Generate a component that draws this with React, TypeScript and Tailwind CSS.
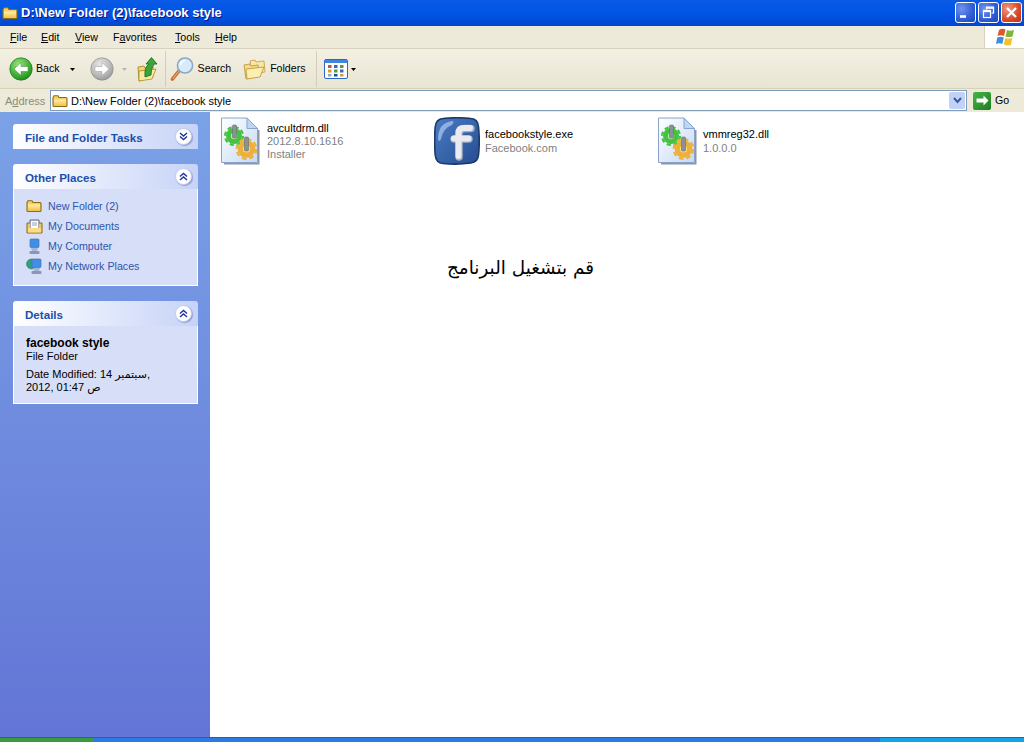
import React from "react";

const Folder = ({ s = 16 }: { s?: number }) => (
  <svg width={s} height={s} viewBox="0 0 16 16">
    <defs>
      <linearGradient id="fo" x1="0" y1="0" x2="0" y2="1">
        <stop offset="0" stopColor="#fff0a8" />
        <stop offset="1" stopColor="#f0c14a" />
      </linearGradient>
    </defs>
    <path d="M1 4.5 L2 2.8 H6 L7 4.5 H14 Q15 4.5 15 5.5 V12.5 Q15 13.5 14 13.5 H2 Q1 13.5 1 12.5 Z" fill="#f5cf62" stroke="#8f6a14" strokeWidth="1.1" />
    <path d="M2 6.5 H14 V12.8 H2 Z" fill="url(#fo)" />
  </svg>
);

const OpenFolders = () => (
  <svg width="24" height="24" viewBox="0 0 24 24">
    <path d="M7 4 L12 3 L13 5 L21 4 L22 15 L9 17 Z" fill="#f8e7a6" stroke="#c9a44c" strokeWidth="0.9" />
    <path d="M1 8 L7 7 L8 9 L15 8 L16 19 L3 22 Z" fill="#f6dc8a" stroke="#c09a3e" strokeWidth="0.9" />
    <path d="M3 12 L21 10 L17 20 L4 22 Z" fill="#fcedb0" stroke="#c09a3e" strokeWidth="0.9" />
  </svg>
);

const Up = () => (
  <svg width="22" height="26" viewBox="0 0 22 26">
    <path d="M2 11 L8 10 L9 12 L17 11 L17 21 L3 25 Z" fill="#f3d26f" stroke="#a98a2c" strokeWidth="0.9" />
    <path d="M3 15 L20 13 L16 23 L3 25 Z" fill="#fbe9a2" stroke="#a98a2c" strokeWidth="0.8" />
    <path d="M9 21 Q8 11 13 8 L10 8 L15.5 1.5 L21 8 L18 8 Q15 12 15 19 Z" fill="#3aa53a" stroke="#186b18" strokeWidth="0.8" />
  </svg>
);

const Search = () => (
  <svg width="26" height="26" viewBox="0 0 26 26">
    <path d="M8.5 15.5 L2.5 23" stroke="#c06f35" strokeWidth="3.6" strokeLinecap="round" />
    <path d="M8.5 15.5 L3 22.5" stroke="#eeaa76" strokeWidth="1.2" strokeLinecap="round" />
    <circle cx="15" cy="9.5" r="7.6" fill="#d7ecfb" stroke="#8aa8c4" strokeWidth="1.5" />
    <path d="M10.5 9 A5 5 0 0 1 15 4.8" stroke="#fff" strokeWidth="1.6" fill="none" />
  </svg>
);

const Views = () => (
  <svg width="24" height="20" viewBox="0 0 24 20">
    <rect x="0.5" y="0.5" width="23" height="19" rx="1.5" fill="#fff" stroke="#2c66c9" />
    <rect x="1" y="1" width="22" height="3" fill="#3f86e0" />
    <g>
      <rect x="4" y="6" width="3.5" height="3" fill="#c2543f" /><rect x="10" y="6" width="3.5" height="3" fill="#3a69b5" /><rect x="16" y="6" width="3.5" height="3" fill="#5b9a3c" />
      <rect x="4" y="10.5" width="3.5" height="3" fill="#c9a043" /><rect x="10" y="10.5" width="3.5" height="3" fill="#5b9a3c" /><rect x="16" y="10.5" width="3.5" height="3" fill="#3a69b5" />
      <rect x="4" y="15" width="3.5" height="2.5" fill="#a3a3c0" /><rect x="10" y="15" width="3.5" height="2.5" fill="#1f4f9c" /><rect x="16" y="15" width="3.5" height="2.5" fill="#c9a043" />
    </g>
  </svg>
);

const Nav = ({ dir, on }: { dir: "l" | "r"; on: boolean }) => (
  <svg width="24" height="24" viewBox="0 0 24 24">
    <defs>
      <radialGradient id={"nv" + dir} cx="0.4" cy="0.3" r="0.8">
        <stop offset="0" stopColor={on ? "#9fe27c" : "#e6e6e6"} />
        <stop offset="0.6" stopColor={on ? "#3fb034" : "#b9b9b9"} />
        <stop offset="1" stopColor={on ? "#1b7d1e" : "#8e8e8e"} />
      </radialGradient>
    </defs>
    <circle cx="12" cy="12" r="11.2" fill={"url(#nv" + dir + ")"} stroke={on ? "#1d7a22" : "#8f8f8f"} strokeWidth="0.7" />
    <path d={dir === "l" ? "M5 12 L12 5.5 V9.5 H19 V14.5 H12 V18.5 Z" : "M19 12 L12 5.5 V9.5 H5 V14.5 H12 V18.5 Z"} fill="#fff" stroke={on ? "#2c8a2c" : "#9a9a9a"} strokeWidth="0.5" />
  </svg>
);

const Chev = ({ up }: { up: boolean }) => (
  <span className="flex h-[17px] w-[17px] items-center justify-center rounded-full border border-[#c3cdea] bg-white shadow-[1px_1px_1px_#8d9dd6]">
    <svg width="9" height="9" viewBox="0 0 9 9" fill="none" stroke="#20329a" strokeWidth="1.4">
      {up ? <path d="M1 4.5 L4.5 1.5 L8 4.5 M1 8 L4.5 5 L8 8" /> : <path d="M1 1 L4.5 4 L8 1 M1 4.5 L4.5 7.5 L8 4.5" />}
    </svg>
  </span>
);

const Dll = ({ id }: { id: string }) => (
  <svg width="40" height="48" viewBox="0 0 40 48">
    <defs>
      <linearGradient id={id} x1="0" y1="0" x2="1" y2="1">
        <stop offset="0" stopColor="#ffffff" />
        <stop offset="1" stopColor="#c4d9f5" />
      </linearGradient>
    </defs>
    <path d="M4 47.5 H39.5 V13 H38 V46 H4 Z" fill="#8c96a6" />
    <path d="M1.5 1 H27 L37.5 11.5 V45.5 H1.5 Z" fill={`url(#${id})`} stroke="#8aa3cc" />
    <path d="M27 1 V11.5 H37.5 Z" fill="#bcd6f5" stroke="#8aa3cc" />
    <circle cx="14" cy="19" r="8" fill="#45c240" />
    <circle cx="14" cy="19" r="9" fill="none" stroke="#45c240" strokeWidth="2.2" strokeDasharray="4.2 2.9" />
    <circle cx="14" cy="19" r="3.2" fill="#b7eaa0" />
    <rect x="12.5" y="8" width="4" height="13" rx="1" fill="#8a9295" stroke="#5f6568" strokeWidth="0.5" />
    <circle cx="26.5" cy="32" r="8.8" fill="#eeb03c" />
    <circle cx="26.5" cy="32" r="9.8" fill="none" stroke="#eeb03c" strokeWidth="2.2" strokeDasharray="4.6 3.1" />
    <circle cx="26.5" cy="32" r="3.6" fill="#f9dd84" />
    <rect x="24.5" y="20" width="4" height="14" rx="1" fill="#8a9295" stroke="#5f6568" strokeWidth="0.5" />
  </svg>
);

const Fb = () => (
  <svg width="46" height="48" viewBox="0 0 46 48">
    <defs>
      <linearGradient id="fb" x1="0" y1="0" x2="1" y2="1">
        <stop offset="0" stopColor="#4a7cc4" />
        <stop offset="1" stopColor="#264d90" />
      </linearGradient>
    </defs>
    <path d="M9 1.5 Q23 0 37 1.5 Q44 2 44.5 10 Q46 24 44.5 38 Q44 45 37 46 Q23 48 9 46.5 Q2 46 1.2 38 Q0 24 1.2 10 Q2 2 9 1.5 Z" fill="url(#fb)" stroke="#1c3869" strokeWidth="1.6" />
    <path d="M4 22 Q4 6 18 4 Q21 4 18 8 Q9 11 7 22 Q5 26 4 22 Z" fill="#a8c6ee" opacity="0.75" />
    <path d="M25 40 V17 Q25 11.5 31 11.5 H37 M20 22 H35" fill="none" stroke="#9fb0c8" strokeWidth="7.5" strokeLinecap="round" />
    <path d="M24.5 39 V16 Q24.5 11 30 11 H36 M20 21.5 H34.5" fill="none" stroke="#e9ebee" strokeWidth="6" strokeLinecap="round" />
  </svg>
);

const Tile = ({ w, icon, gap, lh, lines }: { w: string; icon: React.ReactNode; gap: string; lh: string; lines: string[] }) => (
  <div className={`flex items-center ${w} ${gap}`}>
    <div className="flex shrink-0">{icon}</div>
    <div className="flex flex-col">
      {lines.map((l, i) => (
        <span key={l} className={`${lh} whitespace-nowrap ${i === 0 ? "text-black" : "text-[#7f7f7f]"}`}>{l}</span>
      ))}
    </div>
  </div>
);

const Panel = ({ title, up, children }: { title: string; up: boolean; children?: React.ReactNode }) => (
  <div className="w-[185px]">
    <div className="flex h-[25px] items-center justify-between rounded-t-[3px] bg-gradient-to-r from-white to-[#c6d3f7] pl-3 pr-[6px]">
      <span className="pt-[2px] text-[11.6px] font-bold text-[#1c4fab]">{title}</span>
      <Chev up={up} />
    </div>
    {children && <div className="border border-t-0 border-white bg-[#d6dff7] px-3">{children}</div>}
  </div>
);

const Place = ({ icon, label }: { icon: React.ReactNode; label: string }) => (
  <div className="flex h-[20px] items-center gap-[5px] text-[10.7px] text-[#2f55ad]">
    <span className="flex w-[18px] justify-center">{icon}</span>
    <span>{label}</span>
  </div>
);

const Monitor = ({ globe }: { globe?: boolean }) => (
  <svg width="17" height="17" viewBox="0 0 17 17">
    {globe && <circle cx="5.5" cy="6" r="5" fill="#2f9f7c" stroke="#1c6e68" strokeWidth="0.5" />}
    <rect x={globe ? 6 : 4} y="1" width="9" height="8.5" rx="1" fill="#3f8fe6" stroke="#5a6fa0" strokeWidth="0.7" />
    <path d={globe ? "M7 10 H14 L13 13 H8 Z" : "M5 10 H12 L11 13 H6 Z"} fill="#a5b4d6" />
    <rect x={globe ? 5.5 : 3.5} y="13" width="10" height="3" rx="1" fill="#8a97bc" />
  </svg>
);

const Docs = () => (
  <svg width="17" height="17" viewBox="0 0 17 17">
    <path d="M1 5 H4 V2 H13 V5 H16 V15 H1 Z" fill="#eec765" stroke="#8f6a14" strokeWidth="1" />
    <rect x="4.5" y="2.5" width="8" height="8" fill="#fff" stroke="#6f86b6" strokeWidth="0.6" />
    <path d="M6 5 H11 M6 7 H11" stroke="#6f86b6" strokeWidth="0.8" />
    <rect x="2" y="10" width="13" height="4.5" fill="#f8dc89" />
  </svg>
);

const Flag = () => (
  <svg width="20" height="20" viewBox="0 0 20 20">
    <path d="M3 3 Q6 1 9.5 2.5 L8 9 Q5 7.5 1.5 9 Z" fill="#e0562c" />
    <path d="M11 3 Q14 4.5 18 3 L16.5 9.5 Q13 10.5 9.5 9.5 Z" fill="#7fb53a" />
    <path d="M1.2 10.5 Q5 9 7.8 10.5 L6.3 17 Q3 15.5 0 17 Z" fill="#3f8fdc" />
    <path d="M9.2 11 Q13 12 16.3 11 L15 18 Q11 19 7.8 17.5 Z" fill="#f2c230" />
  </svg>
);

const WinBtn = ({ kind }: { kind: "min" | "max" | "close" }) => (
  <div className={`flex h-[21px] w-[21px] items-center justify-center rounded-[3px] border border-white ${kind === "close" ? "bg-[radial-gradient(circle_at_30%_30%,#ec9a80,#d9482a_60%,#b53414)]" : "bg-[radial-gradient(circle_at_30%_30%,#6f95ee,#2f5bd6_60%,#2146b8)]"}`}>
    <svg width="15" height="15" viewBox="0 0 15 15" fill="none" stroke="#fff">
      {kind === "min" && <path d="M2 11.5 H8" strokeWidth="2.6" />}
      {kind === "max" && (<g strokeWidth="1.2"><path d="M5.5 4.5 V2 H12.5 V8 H10.5" /><path d="M5.5 3 H12.5" strokeWidth="1.6" /><rect x="2.5" y="5.5" width="7" height="7" /><path d="M2.5 6.3 H9.5" strokeWidth="1.6" /></g>)}
      {kind === "close" && <path d="M3 3 L12 12 M12 3 L3 12" strokeWidth="2.3" />}
    </svg>
  </div>
);

const Tri = ({ c = "#000" }: { c?: string }) => (
  <svg width="5" height="3" viewBox="0 0 5 3"><path d="M0 0 H5 L2.5 3 Z" fill={c} /></svg>
);

export default function App() {
  return (
    <div className="flex h-[742px] w-[1024px] flex-col overflow-hidden bg-white font-['Liberation_Sans','DejaVu_Sans',sans-serif] text-[11px] text-black">
      {/* Title */}
      <div className="flex h-[26px] items-center justify-between bg-gradient-to-b from-[#0a5ae6] via-[#0055e5] to-[#0246cf] pl-[2px] pr-[2px]">
        <div className="flex items-center gap-[3px]">
          <Folder />
          <span className="text-[13px] font-bold text-white [text-shadow:1px_1px_#0f1089]">D:\New Folder (2)\facebook style</span>
        </div>
        <div className="flex gap-[2px] pb-[1px]">
          <WinBtn kind="min" /><WinBtn kind="max" /><WinBtn kind="close" />
        </div>
      </div>
      {/* Menu */}
      <div className="flex h-[23px] items-stretch border-b border-[#d8d2bd] bg-[#eeead9]">
        <div className="flex flex-1 items-center pl-[10px] pt-[1px] text-[10.7px]">
          <span className="w-[31px]"><u>F</u>ile</span>
          <span className="w-[34px]"><u>E</u>dit</span>
          <span className="w-[38px]"><u>V</u>iew</span>
          <span className="w-[62px]">F<u>a</u>vorites</span>
          <span className="w-[40px]"><u>T</u>ools</span>
          <span><u>H</u>elp</span>
        </div>
        <div className="flex w-[40px] items-center justify-center border-l border-[#d8d2bd] bg-white pl-[2px]"><Flag /></div>
      </div>
      {/* Toolbar */}
      <div className="flex h-[40px] items-center border-b border-[#d8d2bd] bg-gradient-to-b from-[#f3f0e3] to-[#e9e5d3] pl-[9px] pt-[1px] text-[10.6px]">
        <Nav dir="l" on />
        <span className="ml-[3px]">Back</span>
        <span className="ml-[10px] flex"><Tri /></span>
        <span className="ml-[15px]"><Nav dir="r" on={false} /></span>
        <span className="ml-[8px] flex"><Tri c="#b5b5b5" /></span>
        <span className="ml-[9px] flex"><Up /></span>
        <span className="ml-[7px] mr-[4px] h-[36px] w-px bg-[#d2ccb8]" />
        <Search />
        <span className="ml-[2px]">Search</span>
        <span className="ml-[12px]"><OpenFolders /></span>
        <span className="ml-[3px]">Folders</span>
        <span className="ml-[11px] mr-[7px] h-[36px] w-px bg-[#d2ccb8]" />
        <Views />
        <span className="ml-[3px] flex"><Tri /></span>
      </div>
      {/* Address */}
      <div className="flex h-[23px] items-center bg-[#eeead9] pl-[5px]">
        <span className="w-[45px] pt-[1px] text-[#8c8a7d]">A<u>d</u>dress</span>
        <div className="flex h-[21px] w-[917px] items-center border border-[#7f9db9] bg-white pl-[1px]">
          <Folder />
          <span className="ml-[3px] flex-1 pt-[1px]">D:\New Folder (2)\facebook style</span>
          <span className="mr-px flex h-[17px] w-[16px] items-center justify-center rounded-[2px] bg-[#c2d2f7]">
            <svg width="9" height="7" viewBox="0 0 9 7" fill="none" stroke="#3a5a9a" strokeWidth="2"><path d="M1 1 L4.5 5 L8 1" /></svg>
          </span>
        </div>
        <span className="ml-[6px] flex h-[18px] w-[18px] items-center justify-center rounded-[2px] bg-gradient-to-br from-[#47b647] to-[#1b7d1e]">
          <svg width="13" height="11" viewBox="0 0 13 11" fill="#fff"><path d="M12.5 5.5 L7.5 0.5 V3.5 H0.5 V7.5 H7.5 V10.5 Z" /></svg>
        </span>
        <span className="ml-[4px] pt-[1px] text-[10.6px]">Go</span>
      </div>
      {/* Main */}
      <div className="flex min-h-0 flex-1">
        <div className="flex w-[210px] shrink-0 flex-col gap-[15px] bg-gradient-to-b from-[#7ba2e7] to-[#6375d6] pl-[13px] pt-[12px]">
          <Panel title="File and Folder Tasks" up={false} />
          <Panel title="Other Places" up>
            <div className="-ml-[1px] pb-[9px] pt-[7px]">
              <Place icon={<Folder />} label="New Folder (2)" />
              <Place icon={<Docs />} label="My Documents" />
              <Place icon={<Monitor />} label="My Computer" />
              <Place icon={<Monitor globe />} label="My Network Places" />
            </div>
          </Panel>
          <Panel title="Details" up>
            <div className="pb-[9px] pt-[11px]">
              <div className="h-[13px] text-[12px] font-bold leading-[13px]">facebook style</div>
              <div className="h-[13px] leading-[13px]">File Folder</div>
              <div className="mt-[5px] leading-[13px]">Date Modified: 14 سبتمبر,<br />2012, 01:47 ص</div>
            </div>
          </Panel>
        </div>
        <div className="flex flex-1 flex-col pl-[10px] pt-[5px]">
          <div className="flex">
            <Tile w="w-[212px]" gap="gap-[7px]" lh="h-[13px] leading-[13px]" icon={<Dll id="d1" />} lines={["avcultdrm.dll", "2012.8.10.1616", "Installer"]} />
            <div className="ml-[2px] w-[223px]">
              <Tile w="w-full" gap="gap-[5px]" lh="h-[14px] leading-[14px]" icon={<Fb />} lines={["facebookstyle.exe", "Facebook.com"]} />
            </div>
            <Tile w="w-[240px]" gap="gap-[6px]" lh="h-[14px] leading-[14px]" icon={<Dll id="d2" />} lines={["vmmreg32.dll", "1.0.0.0"]} />
          </div>
          <div dir="rtl" className="ml-[228px] mt-[90px] w-[146px] whitespace-nowrap font-['DejaVu_Sans',sans-serif] text-[18.4px] leading-[26px] text-black">قم بتشغيل البرنامج</div>
        </div>
      </div>
      {/* Taskbar */}
      <div className="flex h-[5px] border-t border-[#1f5fbf] bg-[#2d7ae0]">
        <div className="w-[94px] bg-[#3a9a3f]" />
        <div className="flex-1" />
        <div className="w-[144px] bg-[#14a3e6]" />
      </div>
    </div>
  );
}
